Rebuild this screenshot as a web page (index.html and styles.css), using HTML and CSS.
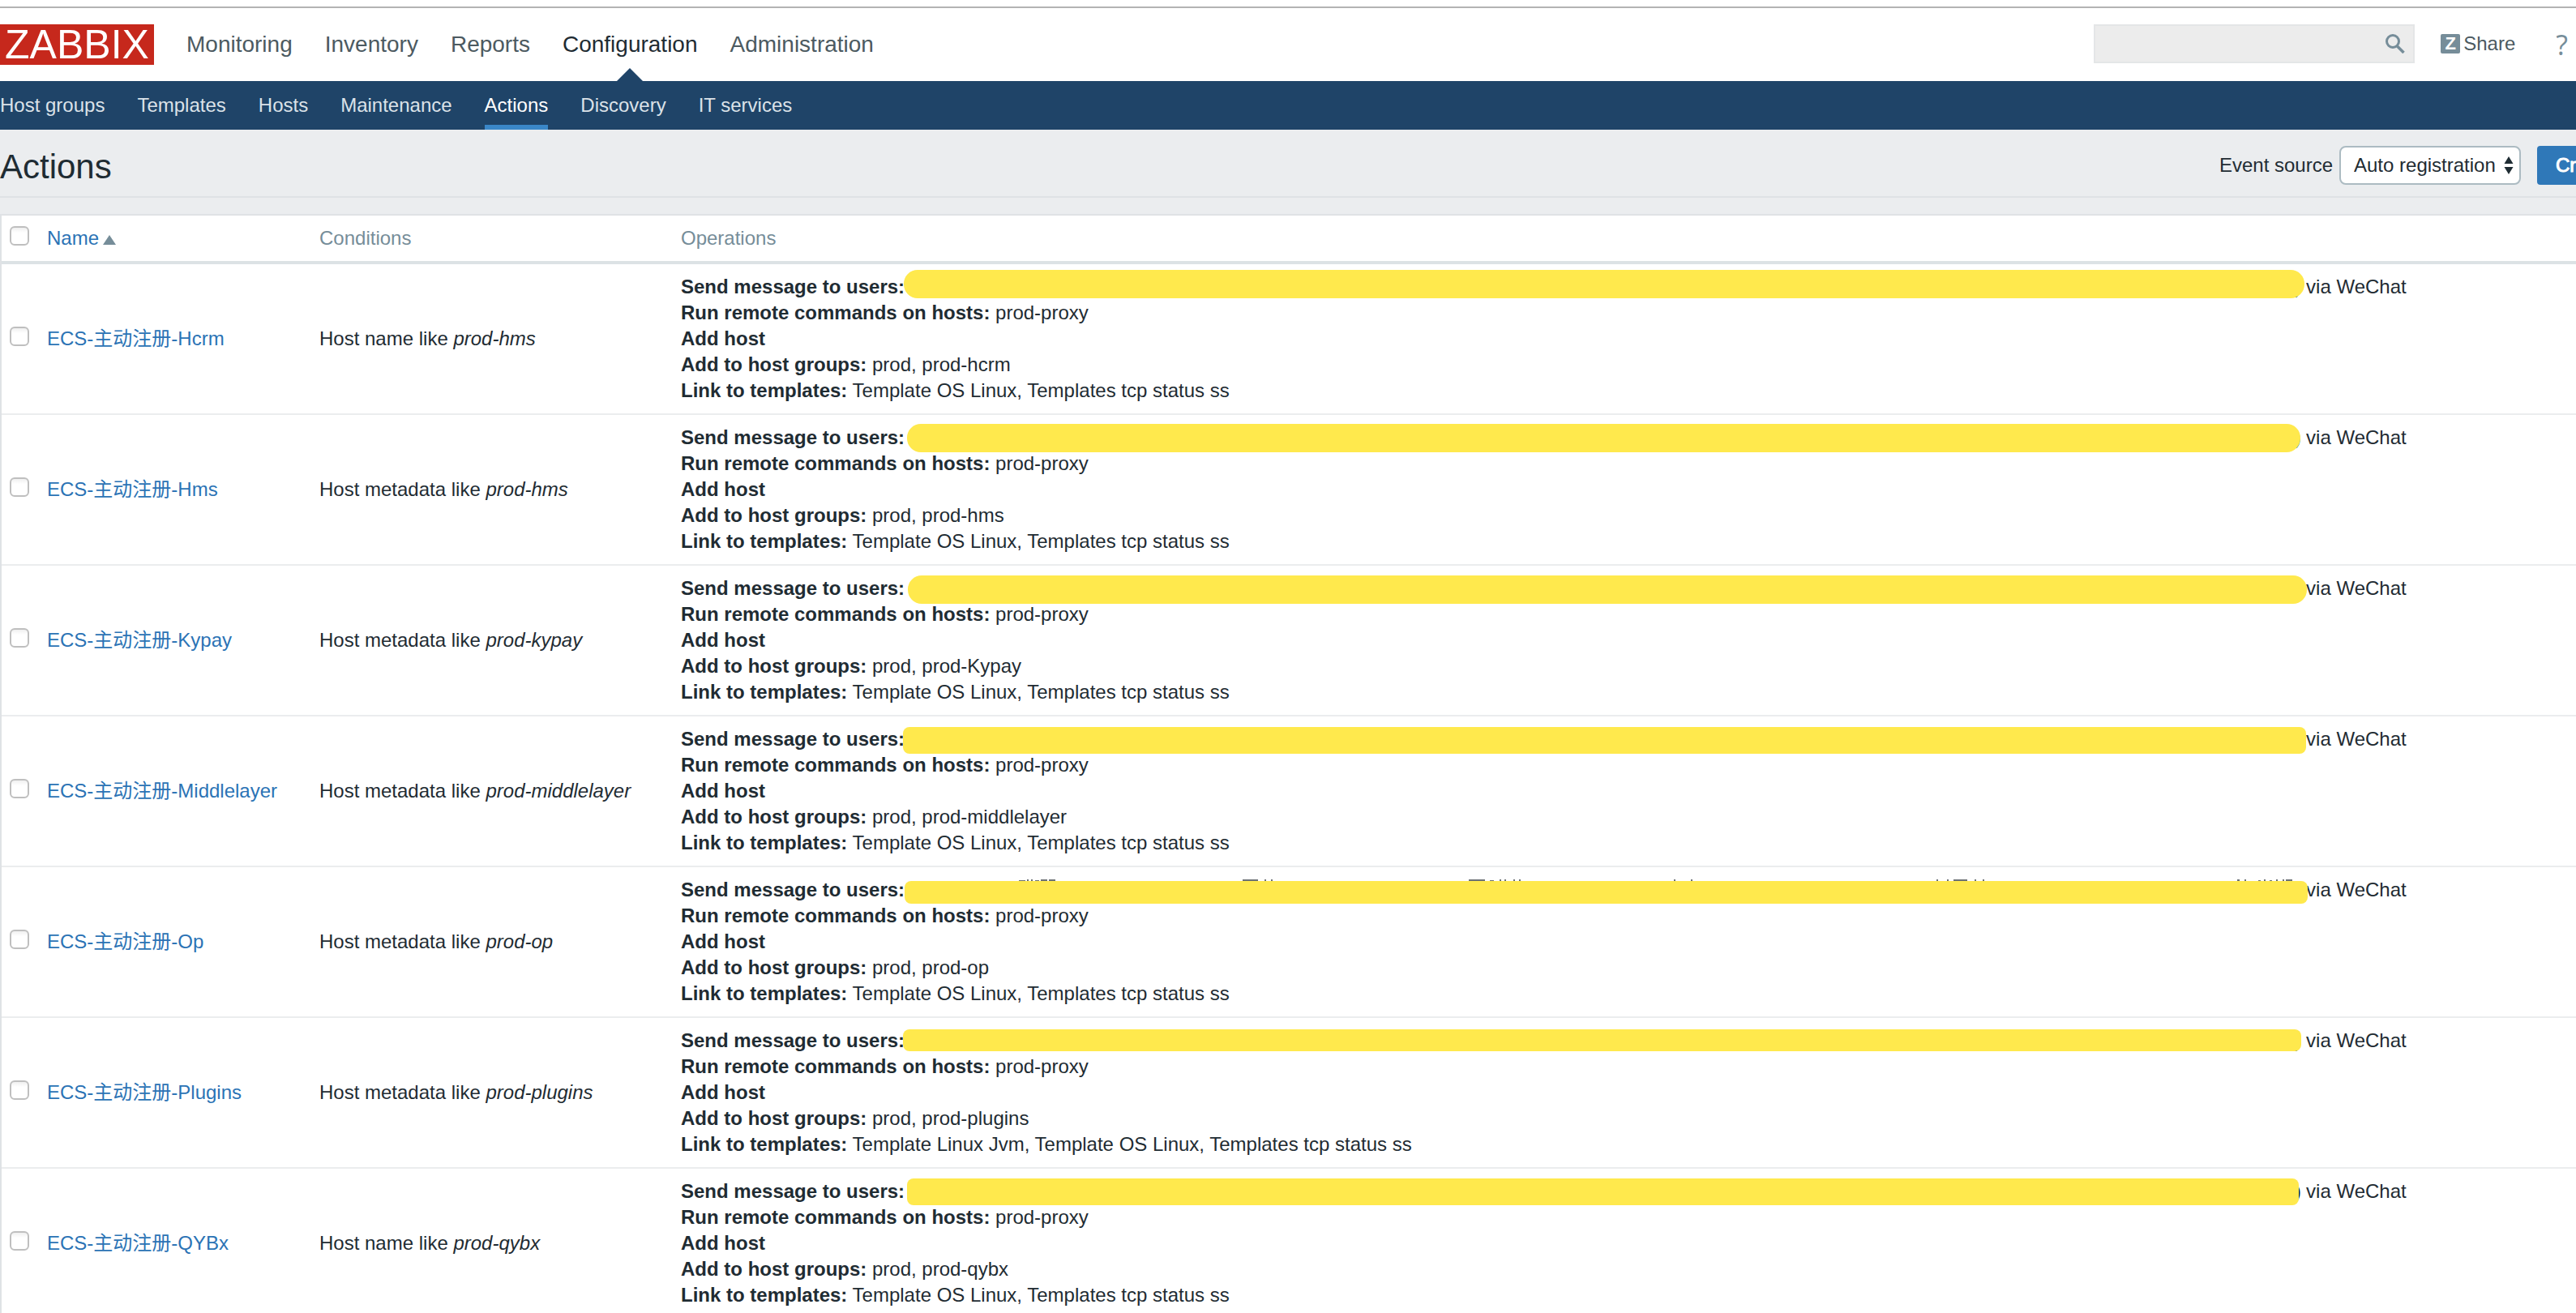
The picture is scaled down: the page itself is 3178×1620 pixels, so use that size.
FILE: index.html
```html
<!DOCTYPE html>
<html lang="en">
<head>
<meta charset="utf-8">
<title>Zabbix: Configuration of actions</title>
<link rel="stylesheet" href="styles.css">
</head>
<body>
<header class="header">
  <a class="logo" href="#">ZABBIX</a>
  <nav class="main-nav">
    <a href="#">Monitoring</a>
    <a href="#">Inventory</a>
    <a href="#">Reports</a>
    <a class="selected" href="#">Configuration</a>
    <a href="#">Administration</a>
  </nav>
  <form class="search">
    <input type="text" aria-label="Search">
    <button type="button" aria-label="Search">
      <svg width="24" height="24" viewBox="0 0 24 24" fill="none" stroke="#768d99"><circle cx="9" cy="9" r="7.500" stroke-width="3"/><path d="M14 14.500L22.500 23" stroke-width="3.500"/></svg>
    </button>
  </form>
  <a class="share" href="#"><span class="badge">Z</span>Share</a>
  <a class="help" href="#" aria-label="Help">?</a>
</header>
<nav class="sub-nav">
  <a href="#">Host groups</a>
  <a href="#">Templates</a>
  <a href="#">Hosts</a>
  <a href="#">Maintenance</a>
  <a class="selected" href="#">Actions</a>
  <a href="#">Discovery</a>
  <a href="#">IT services</a>
</nav>
<div class="title-bar">
  <h1>Actions</h1>
  <form class="filter">
    <label for="source">Event source</label>
    <span class="select">
      <select id="source"><option>Auto registration</option></select>
      <svg width="12" height="22" viewBox="0 0 12 22" fill="#1f2c33"><path d="M6 0L11.500 9H.5zM6 22L.5 13h11z"/></svg>
    </span>
    <button class="create" type="button">Create action</button>
  </form>
</div>
<main>
<table class="list">
  <colgroup><col class="col-check"><col class="col-name"><col class="col-cond"><col></colgroup>
  <thead>
    <tr><th><input type="checkbox" aria-label="Select all"></th><th><a href="#">Name<svg class="sort" width="16" height="12" viewBox="0 0 16 12"><path d="M8 0l8 12H0z" fill="#768d99"/></svg></a></th><th>Conditions</th><th>Operations</th></tr>
  </thead>
  <tbody>
    <tr>
      <td><input type="checkbox" aria-label="ECS-主动注册-Hcrm"></td>
      <td><a href="#">ECS-主动注册-Hcrm</a></td>
      <td>Host name like <i>prod-hms</i></td>
      <td>
        <div class="send"><b>Send message to users:</b><span class="users">)<span class="marker marker-1"></span></span>via WeChat</div>
        <div><b>Run remote commands on hosts:</b> prod-proxy</div>
        <div><b>Add host</b></div>
        <div><b>Add to host groups:</b> prod, prod-hcrm</div>
        <div><b>Link to templates:</b> Template OS Linux, Templates tcp status ss</div>
      </td>
    </tr>
    <tr>
      <td><input type="checkbox" aria-label="ECS-主动注册-Hms"></td>
      <td><a href="#">ECS-主动注册-Hms</a></td>
      <td>Host metadata like <i>prod-hms</i></td>
      <td>
        <div class="send"><b>Send message to users:</b><span class="users">)<span class="marker marker-2"></span></span>via WeChat</div>
        <div><b>Run remote commands on hosts:</b> prod-proxy</div>
        <div><b>Add host</b></div>
        <div><b>Add to host groups:</b> prod, prod-hms</div>
        <div><b>Link to templates:</b> Template OS Linux, Templates tcp status ss</div>
      </td>
    </tr>
    <tr>
      <td><input type="checkbox" aria-label="ECS-主动注册-Kypay"></td>
      <td><a href="#">ECS-主动注册-Kypay</a></td>
      <td>Host metadata like <i>prod-kypay</i></td>
      <td>
        <div class="send"><b>Send message to users:</b><span class="users">)<span class="marker marker-3"></span></span>via WeChat</div>
        <div><b>Run remote commands on hosts:</b> prod-proxy</div>
        <div><b>Add host</b></div>
        <div><b>Add to host groups:</b> prod, prod-Kypay</div>
        <div><b>Link to templates:</b> Template OS Linux, Templates tcp status ss</div>
      </td>
    </tr>
    <tr>
      <td><input type="checkbox" aria-label="ECS-主动注册-Middlelayer"></td>
      <td><a href="#">ECS-主动注册-Middlelayer</a></td>
      <td>Host metadata like <i>prod-middlelayer</i></td>
      <td>
        <div class="send"><b>Send message to users:</b><span class="users">)<span class="marker marker-4"></span></span>via WeChat</div>
        <div><b>Run remote commands on hosts:</b> prod-proxy</div>
        <div><b>Add host</b></div>
        <div><b>Add to host groups:</b> prod, prod-middlelayer</div>
        <div><b>Link to templates:</b> Template OS Linux, Templates tcp status ss</div>
      </td>
    </tr>
    <tr>
      <td><input type="checkbox" aria-label="ECS-主动注册-Op"></td>
      <td><a href="#">ECS-主动注册-Op</a></td>
      <td>Host metadata like <i>prod-op</i></td>
      <td>
        <div class="send"><b>Send message to users:</b><span class="users">)<svg class="strokes" width="1729" height="6" viewBox="0 0 1729 6" stroke="#6b7175" stroke-width="2"><path d="M141 5h8M151 4h2M156 4h2M161 5h5M168 4h8M178 4h8M417 4h19M444 4h2M452 4h2M696 4h20M722 5h5M734 4h2M740 4h2M751 4h2M758 4h2M949 4h2M970 4h2M1273 4h2M1286 4h2M1294 4h17M1320 4h2M1330 4h2M1644 4h3M1653 4h2M1670 5h3M1677 4h2M1684 5h3M1692 4h2M1700 4h2M1704 4h8"/></svg><span class="marker marker-5"></span></span>via WeChat</div>
        <div><b>Run remote commands on hosts:</b> prod-proxy</div>
        <div><b>Add host</b></div>
        <div><b>Add to host groups:</b> prod, prod-op</div>
        <div><b>Link to templates:</b> Template OS Linux, Templates tcp status ss</div>
      </td>
    </tr>
    <tr>
      <td><input type="checkbox" aria-label="ECS-主动注册-Plugins"></td>
      <td><a href="#">ECS-主动注册-Plugins</a></td>
      <td>Host metadata like <i>prod-plugins</i></td>
      <td>
        <div class="send"><b>Send message to users:</b><span class="users">)<span class="marker marker-6"></span></span>via WeChat</div>
        <div><b>Run remote commands on hosts:</b> prod-proxy</div>
        <div><b>Add host</b></div>
        <div><b>Add to host groups:</b> prod, prod-plugins</div>
        <div><b>Link to templates:</b> Template Linux Jvm, Template OS Linux, Templates tcp status ss</div>
      </td>
    </tr>
    <tr>
      <td><input type="checkbox" aria-label="ECS-主动注册-QYBx"></td>
      <td><a href="#">ECS-主动注册-QYBx</a></td>
      <td>Host name like <i>prod-qybx</i></td>
      <td>
        <div class="send"><b>Send message to users:</b><span class="users">)<span class="marker marker-7"></span></span>via WeChat</div>
        <div><b>Run remote commands on hosts:</b> prod-proxy</div>
        <div><b>Add host</b></div>
        <div><b>Add to host groups:</b> prod, prod-qybx</div>
        <div><b>Link to templates:</b> Template OS Linux, Templates tcp status ss</div>
      </td>
    </tr>
  </tbody>
</table>
</main>
</body>
</html>
```
FILE: styles.css
```css
* { box-sizing: border-box; }
html, body { height: 100%; }
body {
  margin: 0;
  padding-top: 8px;
  overflow: hidden;
  background: #fff;
  color: #1f2c33;
  font: 24px/32px "Liberation Sans", Arial, "Noto Sans CJK SC", sans-serif;
}
a { color: #2b73b5; text-decoration: none; }
button, input, select { margin: 0; font: inherit; color: inherit; }
svg { display: block; }

.header {
  display: flex;
  align-items: center;
  height: 92px;
  padding: 0 10px 0 0;
  border-top: 2px solid #b3b3b3;
}
.logo {
  width: 190px;
  margin-right: 40px;
  background: #c6281c;
  color: #fff;
  font-size: 50px;
  line-height: 50px;
  text-align: center;
}
.main-nav { display: flex; gap: 40px; align-self: stretch; font-size: 28px; line-height: 90px; }
.main-nav a { position: relative; color: #4c5a61; }
.main-nav .selected { color: #1f2c33; }
.main-nav .selected::after {
  content: "";
  position: absolute;
  left: calc(50% - 16px);
  bottom: 0;
  border: 16px solid transparent;
  border-top: 0;
  border-bottom-color: #1f4468;
}
.search {
  display: flex;
  align-items: center;
  width: 396px;
  height: 48px;
  margin: 0 32px 2px auto;
  padding-right: 10px;
  border: 2px solid #e4e6e7;
  background: #ececec;
}
.search input { flex: 1; min-width: 0; height: 44px; border: 0; background: none; outline: 0; }
.search button { padding: 0; border: 0; background: none; }
.share { display: flex; gap: 4px; align-items: center; margin: 0 50px 2px 0; color: #4c5a61; }
.badge {
  width: 24px;
  border-radius: 2px;
  background: #768d99;
  color: #fff;
  font-size: 22px;
  font-weight: 700;
  line-height: 24px;
  text-align: center;
}
.help { color: #768d99; font: 34px/36px "Open Sans", sans-serif; }

.sub-nav { display: flex; gap: 40px; height: 60px; background: #1f4468; line-height: 60px; }
.sub-nav a { color: #dbe2e8; }
.sub-nav .selected { border-bottom: 6px solid #3a87c8; color: #fff; }

.title-bar {
  display: flex;
  align-items: flex-start;
  justify-content: space-between;
  height: 84px;
  padding-top: 20px;
  border-bottom: 2px solid #dfe2e5;
  background: #ebedef;
}
h1 { margin: 0; font-size: 42px; font-weight: 400; line-height: 52px; }
.filter { display: flex; align-items: center; margin-right: -142px; }
.filter label { margin-right: 8px; }
.select { position: relative; margin-right: 20px; }
.select select {
  display: block;
  width: 224px;
  height: 48px;
  padding: 0 16px;
  appearance: none;
  border: 2px solid #acbbc2;
  border-radius: 8px;
  background: #fff;
}
.select svg { position: absolute; right: 9px; top: 13px; pointer-events: none; }
.create {
  width: 190px;
  height: 48px;
  padding: 0 23px;
  border: 0;
  border-radius: 4px;
  background: #2f78b8;
  color: #fff;
  text-align: left;
  white-space: nowrap;
  -webkit-text-stroke: 1px #fff;
}

main { padding-top: 20px; background: #ebedef; }
.list {
  width: 100%;
  table-layout: fixed;
  border-collapse: separate;
  border-spacing: 0;
  border-top: 2px solid #dfe2e5;
  border-left: 2px solid #dfe2e5;
  background: #fff;
}
.col-check { width: 46px; }
.col-name { width: 336px; }
.col-cond { width: 446px; }
.list th {
  height: 60px;
  padding: 0 10px;
  border-bottom: 4px solid #dce2e5;
  color: #768d99;
  font-weight: 400;
  text-align: left;
}
.list td { padding: 12px 10px; border-bottom: 2px solid #ebedee; white-space: nowrap; }
.sort { display: inline-block; margin-left: 5px; }
.list input {
  display: block;
  width: 24px;
  height: 24px;
  margin-bottom: 6px;
  appearance: none;
  border: 2px solid #bfbfbf;
  border-radius: 6px;
  background: linear-gradient(#f0f0f0, #fff 30%);
}

.send { display: flex; }
.users { position: relative; width: 1729px; padding-right: 6px; text-align: right; }
.strokes { position: absolute; left: 0; top: 0; }

/* Highlighter strokes that hide the recipients */
.marker { position: absolute; height: 35px; border-radius: 17px; background: #ffe94d; }
.marker-1 { left: -1px; right: 2px; top: -5px; }
.marker-2 { left: 3px; right: 7px; top: -1px; }
.marker-3 { left: 4px; right: -1px; top: 0; }
.marker-4 { left: -2px; right: 0; top: 1px; height: 33px; border-radius: 8px; }
.marker-5 { left: 0; right: -2px; top: 5px; height: 28px; border-radius: 8px; }
.marker-6 { left: -2px; right: 6px; top: 2px; height: 27px; border-radius: 8px; }
.marker-7 { left: 3px; right: 9px; top: 0; height: 33px; border-radius: 8px; }
```
